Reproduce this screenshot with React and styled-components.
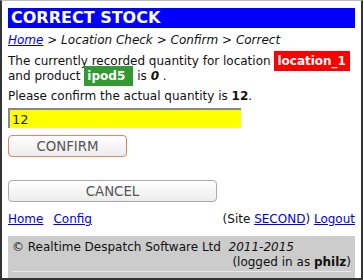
import React from 'react';
import styled, {createGlobalStyle} from 'styled-components';

const Global = createGlobalStyle`
    html, body {
        margin: 0;
        padding: 0;
        background: #fff;
    }
    body {
        font-family: "DejaVu Sans", Verdana, sans-serif;
        font-size: 12px;
        color: #111;
    }
`;

const App = () => {
    return (
        <Frame>
            <Global/>
            <Title>CORRECT STOCK</Title>
            <Crumbs><A href="#">Home</A> &gt; Location Check &gt; Confirm &gt; Correct</Crumbs>
            <Para>
                The currently recorded quantity for location <Badge color="#ff0000">location_1</Badge>
                {' '}and product <Badge color="#339933">ipod5&nbsp;</Badge> is <b><i>0</i></b> .
            </Para>
            <Prompt>Please confirm the actual quantity is <b>12</b>.</Prompt>
            <Input defaultValue="12"/>
            <Button accent width={119}>CONFIRM</Button>
            <Button width={209} $top={23}>CANCEL</Button>
            <Links>
                <LeftLinks>
                    <A href="#">Home</A>
                    <A href="#">Config</A>
                </LeftLinks>
                <span>(Site <A href="#">SECOND</A>) <A href="#">Logout</A></span>
            </Links>
            <Footer>
                <span>© Realtime Despatch Software Ltd &nbsp;<i>2011-2015</i></span>
                <LoggedIn>(logged in as <b>philz</b>)</LoggedIn>
                <Rule/>
            </Footer>
        </Frame>
    );
};

export default App;

const Frame = styled.div`
    width: 363px;
    height: 280px;
    box-sizing: border-box;
    border-top: 1px solid #bbb;
    border-left: 2px solid #333;
    border-right: 2px solid #333;
    border-bottom: 2px solid #333;
    padding: 7px 6px 0 6px;
    overflow: hidden;
    display: flex;
    flex-direction: column;
`;

const Title = styled.div`
    background: #0000ff;
    color: #fff;
    font-weight: bold;
    font-size: 16px;
    height: 20px;
    line-height: 20px;
    padding-left: 3px;
`;

const A = styled.a`
    color: #0000ee;
    text-decoration: underline;
`;

const Crumbs = styled.div`
    font-style: italic;
    margin-top: 5px;
    line-height: 15px;
`;

const Para = styled.div`
    margin-top: 6px;
    line-height: 15px;
`;

const Badge = styled.span`
    background: ${p => p.color};
    color: #fff;
    font-weight: bold;
    padding: 3px 4px 3px 3px;
`;

const Prompt = styled.div`
    margin-top: 5px;
    line-height: 15px;
`;

const Input = styled.input`
    margin-top: 4px;
    width: 233px;
    height: 20px;
    box-sizing: border-box;
    background: #ffff00;
    border: none;
    border-top: 2px solid #888;
    border-left: 2px solid #888;
    padding: 0 0 0 2px;
    font-family: "DejaVu Sans", sans-serif;
    font-size: 13px;
    color: #222;
    outline: none;
`;

const Button = styled.button`
    margin-top: ${p => p.$top || 7}px;
    width: ${p => p.width}px;
    height: 22px;
    box-sizing: border-box;
    border: 1px solid ${p => p.accent ? '#e8825f' : '#aaa'};
    border-radius: 4px;
    background: linear-gradient(#ffffff, #ececec);
    color: #555;
    font-family: "DejaVu Sans", sans-serif;
    font-size: 13.33px;
    padding: 0;
`;

const Links = styled.div`
    margin-top: 10px;
    line-height: 15px;
    display: flex;
    justify-content: space-between;
`;

const LeftLinks = styled.span`
    display: flex;
    gap: 10px;
`;

const Footer = styled.div`
    margin-top: 9px;
    background: #ccc;
    padding: 4px 4px 0 4px;
    flex: 1;
    line-height: 15px;
    display: flex;
    flex-direction: column;
`;

const LoggedIn = styled.span`
    text-align: right;
`;

const Rule = styled.div`
    margin-top: 1px;
    border-top: 1px solid #e8e8e8;
`;
